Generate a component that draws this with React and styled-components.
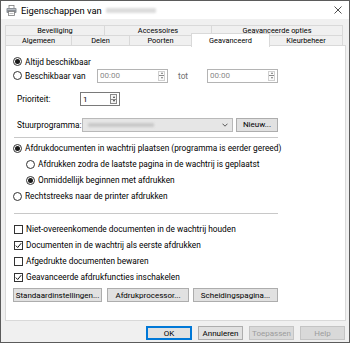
import React from "react";
import styled, { createGlobalStyle } from "styled-components";

const FONT = `Roboto, "Open Sans", "Noto Sans", sans-serif`;

const Global = createGlobalStyle`
  html, body { margin: 0; padding: 0; background: #ffffff; }
  * { box-sizing: border-box; }
  body { font-family: ${FONT}; font-size: 8.3px; color: #000; }
`;

const Window = styled.div`
  width: 350px;
  height: 343px;
  border: 1px solid #5b5b5b;
  background: #f0f0f0;
  display: flex;
  flex-direction: column;
`;

const TitleBar = styled.div`
  height: 18px;
  background: #ffffff;
  display: flex;
  align-items: center;
  padding: 0 5px 0 5px;
  flex: none;
`;

const TitleText = styled.span`
  font-size: 9.4px;
  margin-left: 4px;
  color: #000;
`;

const Redacted = styled.span`
  display: inline-block;
  width: ${(p) => p.$w}px;
  height: ${(p) => p.$h}px;
  background: ${(p) => p.$c || "#d9d9d9"};
  margin-left: ${(p) => p.$ml || 0}px;
  filter: blur(1px);
  border-radius: 1px;
`;

const Close = styled.span`
  margin-left: auto;
  display: flex;
  align-items: center;
  margin-right: 2px;
`;

const Body = styled.div`
  flex: 1;
  display: flex;
  flex-direction: column;
  padding: 6px 3px 0 4px;
  min-height: 0;
`;

const TabRow = styled.div`
  display: grid;
  grid-template-columns: ${(p) => p.$cols};
  height: 10px;
  margin-right: 3px;
  position: relative;
  z-index: ${(p) => p.$z || 0};
`;

const Tab = styled.div`
  display: flex;
  align-items: center;
  justify-content: center;
  font-size: 7.4px;
  background: ${(p) => (p.$active ? "#ffffff" : "#f0f0f0")};
  border: 1px solid #d9d9d9;
  border-left-width: ${(p) => (p.$first ? 1 : 0)}px;
  border-bottom: ${(p) => (p.$active ? "none" : "1px solid #d9d9d9")};
  white-space: nowrap;
  ${(p) =>
    p.$active &&
    `
    margin-top: -2px;
    margin-bottom: -1px;
    border-left-width: 1px;
    margin-left: -1px;
    position: relative;
    z-index: 2;
  `}
`;

const Panel = styled.div`
  height: 276px;
  background: #ffffff;
  border: 1px solid #d9d9d9;
  padding: 9px 0 0 7px;
  display: flex;
  flex-direction: column;
`;

const Row = styled.div`
  height: ${(p) => p.$h}px;
  margin-top: ${(p) => p.$mt || 0}px;
  padding-left: ${(p) => p.$pl || 0}px;
  display: flex;
  align-items: center;
  flex: none;
`;

const GridRow = styled.div`
  height: ${(p) => p.$h}px;
  margin-top: ${(p) => p.$mt || 0}px;
  display: grid;
  grid-template-columns: ${(p) => p.$cols};
  align-items: center;
  flex: none;
`;

const RadioCircle = styled.span`
  width: 9px;
  height: 9px;
  border-radius: 50%;
  border: 1px solid #333333;
  background: #fff;
  display: inline-flex;
  align-items: center;
  justify-content: center;
  flex: none;
  &::after {
    content: "";
    width: 5px;
    height: 5px;
    border-radius: 50%;
    background: ${(p) => (p.$checked ? "#1a1a1a" : "transparent")};
  }
`;

const Box = styled.span`
  width: 9px;
  height: 9px;
  border: 1px solid #333333;
  background: #fff;
  display: inline-flex;
  align-items: center;
  justify-content: center;
  flex: none;
  margin-left: 1px;
`;

const Label = styled.span`
  margin-left: 3px;
  white-space: nowrap;
  color: ${(p) => p.$color || "#000"};
`;

const Text = styled.span`
  white-space: nowrap;
  color: ${(p) => p.$color || "#000"};
  padding-left: ${(p) => p.$pl || 0}px;
`;

const Field = styled.div`
  height: ${(p) => p.$h || 14}px;
  width: ${(p) => p.$w}px;
  border: 1px solid ${(p) => p.$border || "#b4b4b4"};
  background: #fff;
  display: flex;
  align-items: center;
  padding-left: 2px;
  color: ${(p) => p.$color || "#000"};
`;

const FieldValue = styled.span`
  flex: 1;
  font-size: 8px;
`;

const Spin = styled.div`
  width: 7px;
  height: 10px;
  margin-right: 2px;
  display: flex;
  flex-direction: column;
  border: 1px solid ${(p) => (p.$dark ? "#8a8a8a" : "#d0d0d0")};
  background: ${(p) => (p.$dark ? "#f4f4f4" : "#fafafa")};
`;

const SpinHalf = styled.div`
  flex: 1;
  display: flex;
  align-items: center;
  justify-content: center;
  & + & {
    border-top: 1px solid ${(p) => (p.$dark ? "#8a8a8a" : "#e0e0e0")};
  }
`;

const Arrow = styled.span`
  width: 0;
  height: 0;
  border-left: 1.5px solid transparent;
  border-right: 1.5px solid transparent;
  ${(p) =>
    p.$up
      ? `border-bottom: 2px solid ${p.$dark ? "#333" : "#777"};`
      : `border-top: 2px solid ${p.$dark ? "#333" : "#777"};`}
`;

const Select = styled.div`
  width: 151px;
  height: 14px;
  border: 1px solid #b9b9b9;
  background: #e6e6e6;
  display: flex;
  align-items: center;
  padding: 0 4px 0 5px;
`;

const Button = styled.div`
  width: ${(p) => p.$w}px;
  height: 14px;
  border: 1px solid ${(p) => (p.$default ? "#0078d7" : p.$disabled ? "#c4c4c4" : "#adadad")};
  box-shadow: ${(p) => (p.$default ? "inset 0 0 0 1px #0078d7" : "none")};
  background: ${(p) => (p.$disabled ? "#d9d9d9" : "#e1e1e1")};
  color: ${(p) => (p.$disabled ? "#9c9c9c" : "#000")};
  display: flex;
  align-items: center;
  justify-content: center;
  white-space: nowrap;
  font-size: 8px;
  margin-left: ${(p) => p.$ml || 0}px;
  flex: none;
`;

const Separator = styled.div`
  height: 1px;
  width: 264px;
  margin-left: 1px;
  margin-top: ${(p) => p.$mt}px;
  background: #c8c8c8;
  flex: none;
`;

const Footer = styled.div`
  display: flex;
  justify-content: flex-end;
  gap: 6px;
  padding: 5px 1px 0 0;
`;

const Spacer = styled.span`
  flex: 1;
`;

const PrinterIcon = () => (
  <svg width="11" height="11" viewBox="0 0 11 11">
    <rect x="3" y="0.5" width="5" height="3" fill="#fff" stroke="#7a7a7a" strokeWidth="0.8" />
    <rect x="0.5" y="3" width="10" height="5" rx="1" fill="#8a8f96" />
    <rect x="1.5" y="4" width="8" height="1" fill="#b8bdc3" />
    <rect x="2.5" y="6.5" width="6" height="4" fill="#fff" stroke="#7a7a7a" strokeWidth="0.8" />
    <rect x="3.5" y="8" width="4" height="0.6" fill="#9a9a9a" />
  </svg>
);

const CloseIcon = () => (
  <svg width="8" height="8" viewBox="0 0 8 8">
    <path d="M0.5 0.5 L7.5 7.5 M7.5 0.5 L0.5 7.5" stroke="#222" strokeWidth="0.8" />
  </svg>
);

const CheckIcon = () => (
  <svg width="7" height="7" viewBox="0 0 7 7">
    <path d="M0.8 3.6 L2.7 5.5 L6.2 1.2" fill="none" stroke="#111" strokeWidth="1" />
  </svg>
);

const Chevron = () => (
  <svg width="6" height="4" viewBox="0 0 6 4">
    <path d="M0.5 0.7 L3 3.2 L5.5 0.7" fill="none" stroke="#333" strokeWidth="0.8" />
  </svg>
);

const Radio = ({ checked, children, indent = 0 }) => (
  <Row $h={16} $pl={indent}>
    <RadioCircle $checked={checked} />
    <Label>{children}</Label>
  </Row>
);

const Check = ({ checked, children }) => (
  <Row $h={16}>
    <Box>{checked && <CheckIcon />}</Box>
    <Label>{children}</Label>
  </Row>
);

const SpinBox = ({ dark }) => (
  <Spin $dark={dark}>
    <SpinHalf $dark={dark}>
      <Arrow $up $dark={dark} />
    </SpinHalf>
    <SpinHalf $dark={dark}>
      <Arrow $dark={dark} />
    </SpinHalf>
  </Spin>
);

export default function App() {
  return (
    <>
      <Global />
      <Window>
        <TitleBar>
          <PrinterIcon />
          <TitleText>Eigenschappen van</TitleText>
          <Redacted $w={50} $h={5} $ml={4} $c="#dcdcdc" />
          <Close>
            <CloseIcon />
          </Close>
        </TitleBar>
        <Body>
          <TabRow $cols="100px 107px 1fr">
            <Tab $first>Beveiliging</Tab>
            <Tab>Accessoires</Tab>
            <Tab>Geavanceerde opties</Tab>
          </TabRow>
          <TabRow $cols="67px 58px 62px 78px 1fr" $z={2}>
            <Tab $first>Algemeen</Tab>
            <Tab>Delen</Tab>
            <Tab>Poorten</Tab>
            <Tab $active>Geavanceerd</Tab>
            <Tab>Kleurbeheer</Tab>
          </TabRow>
          <Panel>
            <Row $h={13}>
              <RadioCircle $checked />
              <Label>Altijd beschikbaar</Label>
            </Row>
            <GridRow $h={15} $cols="84px 71px 39px 71px">
              <Row $h={15}>
                <RadioCircle />
                <Label>Beschikbaar van</Label>
              </Row>
              <Field $w={71} $color="#8a8a8a">
                <FieldValue>00:00</FieldValue>
                <SpinBox />
              </Field>
              <Text $pl={10} $color="#6d6d6d">tot</Text>
              <Field $w={71} $color="#8a8a8a">
                <FieldValue>00:00</FieldValue>
                <SpinBox />
              </Field>
            </GridRow>
            <GridRow $h={14} $mt={9} $cols="67px 40px">
              <Text $pl={4}>Prioriteit:</Text>
              <Field $w={40} $border="#7a7a7a">
                <FieldValue>1</FieldValue>
                <SpinBox dark />
              </Field>
            </GridRow>
            <GridRow $h={15} $mt={11} $cols="69px 154px 42px">
              <Text $pl={4}>Stuurprogramma:</Text>
              <Select>
                <Redacted $w={66} $h={4} $c="#c9c9c9" />
                <Spacer />
                <Chevron />
              </Select>
              <Button $w={42}>Nieuw...</Button>
            </GridRow>
            <Separator $mt={5} />
            <Row $h={2} />
            <Radio checked>Afdrukdocumenten in wachtrij plaatsen (programma is eerder gereed)</Radio>
            <Radio indent={13}>Afdrukken zodra de laatste pagina in de wachtrij is geplaatst</Radio>
            <Radio indent={13} checked>
              Onmiddellijk beginnen met afdrukken
            </Radio>
            <Radio>Rechtstreeks naar de printer afdrukken</Radio>
            <Separator $mt={9} />
            <Row $h={7} />
            <Check>Niet-overeenkomende documenten in de wachtrij houden</Check>
            <Check checked>Documenten in de wachtrij als eerste afdrukken</Check>
            <Check>Afgedrukte documenten bewaren</Check>
            <Check checked>Geavanceerde afdrukfuncties inschakelen</Check>
            <Row $h={14} $mt={3}>
              <Button $w={89}>Standaardinstellingen...</Button>
              <Button $w={82} $ml={5}>Afdrukprocessor...</Button>
              <Button $w={85} $ml={4}>Scheidingspagina...</Button>
            </Row>
          </Panel>
          <Footer>
            <Button $w={46} $default>OK</Button>
            <Button $w={45}>Annuleren</Button>
            <Button $w={45} $disabled>Toepassen</Button>
            <Button $w={45} $disabled>Help</Button>
          </Footer>
        </Body>
      </Window>
    </>
  );
}
